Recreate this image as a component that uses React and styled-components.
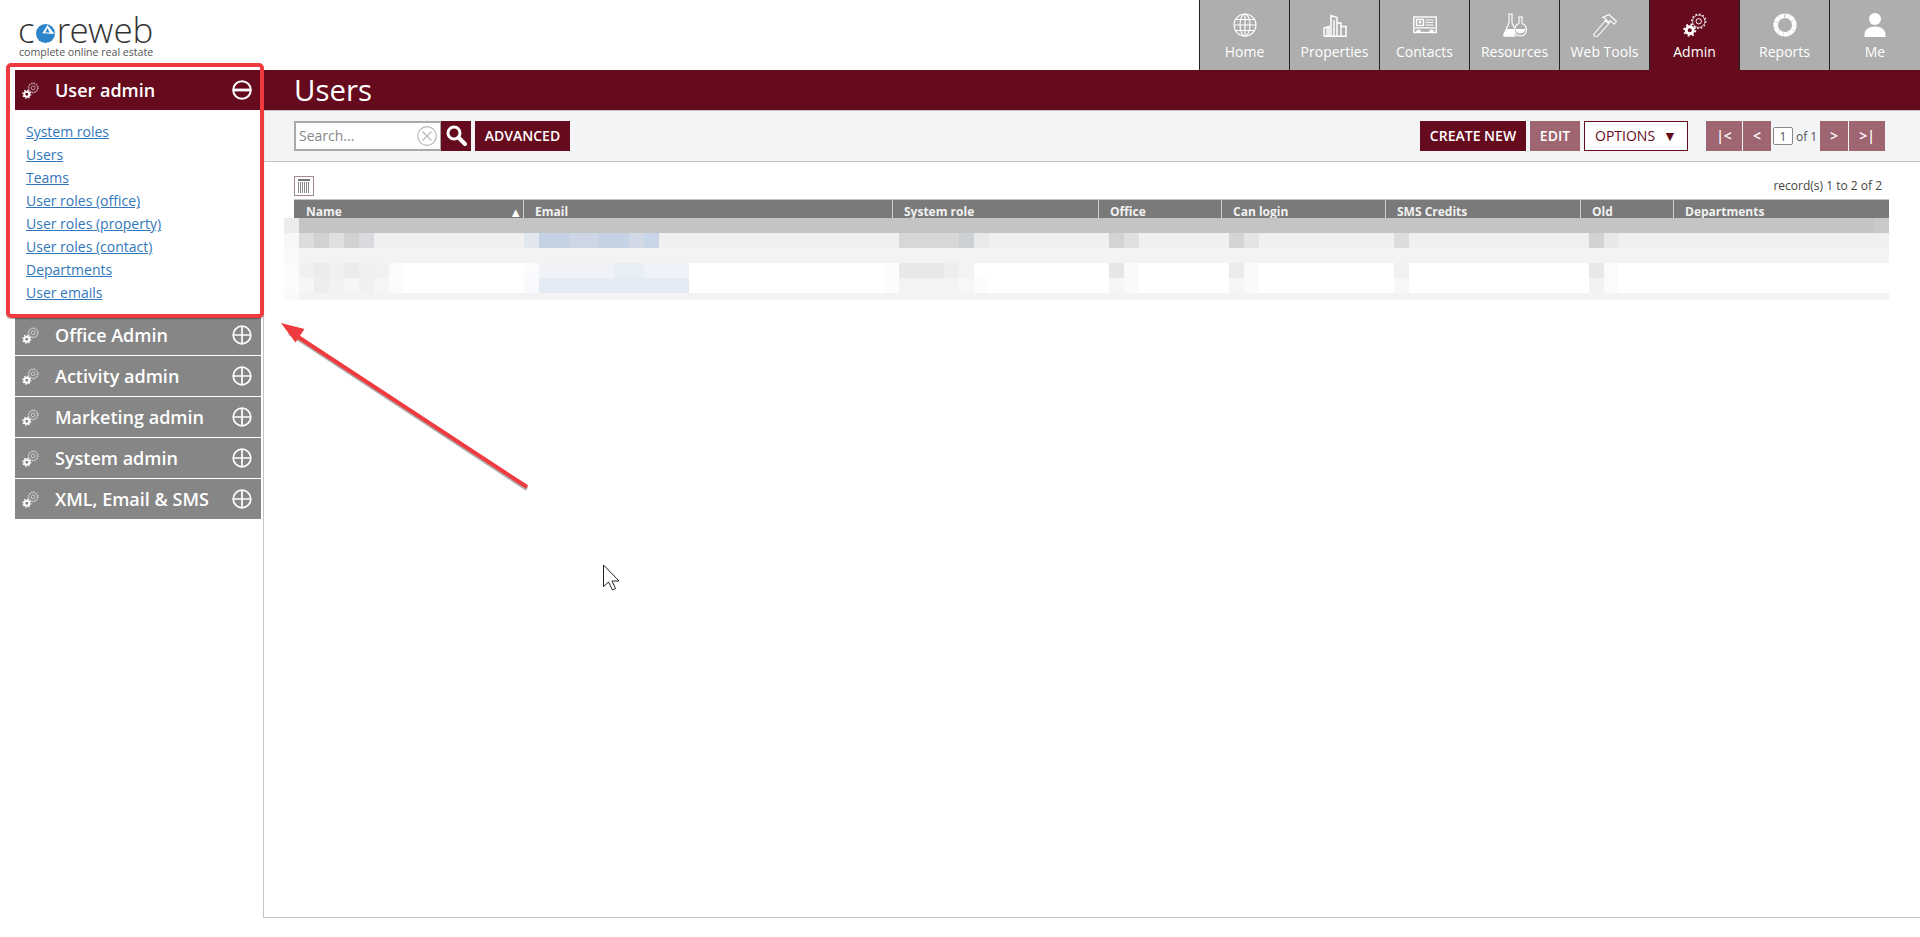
import React from "react";
import styled, { createGlobalStyle } from "styled-components";

const MAROON = "#660b1e";
const FADED = "#9f6571";

const Global = createGlobalStyle`
  html, body { margin: 0; padding: 0; background: #fff; }
  body { font-family: "Open Sans", "Liberation Sans", sans-serif; color: #444; height: 937px; overflow: hidden; }
  * { box-sizing: border-box; }
`;

const Page = styled.div`position: relative; width: 1920px; height: 937px; overflow: hidden;`;
const Header = styled.header`display: flex; justify-content: space-between; height: 70px;`;
const Logo = styled.div`padding: 12px 0 0 18px; width: 170px;`;
const LogoWord = styled.div`
  display: flex; align-items: flex-end; height: 35px; font-family: "Open Sans Light", "Open Sans", sans-serif;
  font-size: 35px; font-weight: 300; line-height: 35px; color: #333;
  svg { margin: 0 2px 4px 1px; flex: none; }
`;
const LogoTag = styled.div`font-size: 10.6px; line-height: 16px; margin: -3px 0 0 1px; color: #555; white-space: nowrap;`;
const Nav = styled.nav`display: grid; grid-template-columns: repeat(7, 90px) 91px;`;
const Tab = styled.a`
  display: flex; flex-direction: column; align-items: center; height: 70px; padding-top: 13px;
  border-left: 1px solid #222; background: ${p => (p.$active ? MAROON : "#aeaeae")};
  color: #fff; font-size: 14px; line-height: 20px;
  svg { display: block; margin-bottom: 5px; }
`;

const Body = styled.div`display: flex; height: 848px;`;
const Sidebar = styled.aside`width: 263px; padding: 0 2px 0 15px; flex: none;`;
const SectionHead = styled.div`
  display: flex; align-items: center; height: 40px; margin-bottom: ${p => (p.$open ? 0 : "1px")};
  padding: 0 9px 0 7px; background: ${p => (p.$open ? MAROON : "#868686")};
  color: #fff; font-size: 18px; font-weight: 600; white-space: nowrap;
`;
const SectionTitle = styled.span`flex: 1; padding-left: 16px;`;
const Links = styled.ul`list-style: none; margin: 0; padding: 10px 0 11px 11px;`;
const LinkItem = styled.li`height: 23px; line-height: 23px; font-size: 14px;`;
const SideLink = styled.a`color: #3277bb; text-decoration: underline;`;

const Main = styled.main`flex: 1; border-left: 1px solid #c4c4c4; border-bottom: 1px solid #c4c4c4; min-width: 0;`;
const TitleBar = styled.h1`
  margin: 0; height: 40px; padding-left: 30px; background: ${MAROON}; color: #fff;
  font-size: 29.4px; font-weight: 400; line-height: 40px;
`;
const Toolbar = styled.div`
  display: flex; align-items: center; height: 52px; padding: 0 35px 0 30px;
  background: #f3f4f6; border-top: 1px solid #c0c4c8; border-bottom: 1px solid #c0c4c8;
`;
const SearchBox = styled.div`
  display: flex; align-items: center; justify-content: space-between; width: 147px; height: 30px;
  padding: 0 3px 1px 3px; background: #fff; border: 1px solid #aaa; border-width: 2px 1px 2px 2px;
  font-size: 14px; color: #888;
`;
const Button = styled.button`
  display: inline-flex; align-items: center; justify-content: center; height: 30px; padding: 0 0 1px;
  width: ${p => p.$w}px; margin-left: ${p => p.$ml || 0}px; border: 0; background: ${p => (p.$faded ? FADED : MAROON)};
  color: #fff; font: 600 14px "Open Sans", sans-serif; white-space: nowrap;
`;
const OptionsButton = styled(Button)`
  background: #fff; border: 1px solid ${MAROON}; color: ${MAROON}; font-weight: 400; gap: 8px;
`;
const Spacer = styled.div`flex: 1;`;
const PageInput = styled.span`
  display: inline-flex; align-items: center; justify-content: center; width: 20px; height: 18px; margin-left: 2px;
  background: #fff; border: 1px solid #888; border-radius: 2px; font-size: 12px; color: #555;
`;
const PageOf = styled.span`width: 27px; padding-left: 3px; font-size: 12px; color: #555; white-space: nowrap;`;

const Content = styled.section`padding: 14px 31px 0 30px;`;
const ListTop = styled.div`display: flex; align-items: center; justify-content: space-between; height: 20px; margin-bottom: 3px; padding-right: 7px;`;
const ColumnsButton = styled.span`display: flex; width: 20px; height: 20px;`;
const Records = styled.span`font-size: 12px; color: #444; margin-bottom: 2px;`;
const HeadRow = styled.div`
  display: grid; grid-template-columns: 229px 369px 206px 123px 164px 195px 93px 215px;
  height: 19px; background: #7a7a7a; border-top: 1px solid #c4c4c4; overflow: hidden;
`;
const HeadCell = styled.div`
  position: relative; padding-left: 11px; border-left: 1px solid ${p => (p.$first ? "#7a7a7a" : "#cfcfcf")};
  color: #f2f2f2; font-size: 12px; font-weight: 700; line-height: 23px; white-space: nowrap;
`;
const SortMark = styled.span`position: absolute; right: 1px; top: 1px; font-size: 13px; color: #fff;`;
const Mosaic = styled.div`margin-left: -10px; width: 1605px;`;
const MosaicRow = styled.div`display: flex; height: ${p => p.$h}px;`;
const MosaicCell = styled.i.attrs(p => ({ style: { width: p.$w, background: p.$c } }))`display: block; flex: none;`;

const RedBox = styled.div`
  position: absolute; left: 6px; top: 63px; width: 258px; height: 255px;
  border: 4px solid #ef3b3f; border-radius: 5px; box-shadow: 0 1px 1px rgba(0,0,0,.35);
`;
const Overlay = styled.svg`position: absolute; left: 0; top: 0; pointer-events: none;`;

/* ---- icons ---- */
const Gears = ({ size = 24, op = 1 }) => (
  <svg width={size} height={size} viewBox="0 0 32 32" fill="none" stroke="#fff">
    <g opacity={op}>
      <circle cx="21" cy="11" r="8.200" strokeWidth="1" />
      <circle cx="21" cy="11" r="9.500" strokeWidth="1.600" strokeDasharray="2.200 2.770" />
      <circle cx="21" cy="11" r="3.600" strokeWidth="1.300" />
    </g>
    <circle cx="9" cy="23" r="4.700" strokeWidth="3.800" />
    <circle cx="9" cy="23" r="7.500" strokeWidth="2.400" strokeDasharray="2.600 3.290" />
  </svg>
);
const Globe = () => (
  <svg width="24" height="24" viewBox="0 0 24 24" fill="none" stroke="#fff" strokeWidth="1.100">
    <circle cx="12" cy="12" r="11" />
    <ellipse cx="12" cy="12" rx="5" ry="11" />
    <path d="M12 1v22M1 12h22M2.800 6.500h18.400M2.800 17.500h18.400" />
  </svg>
);
const Buildings = () => (
  <svg width="24" height="24" viewBox="0 0 24 24" fill="none" stroke="#fff" strokeWidth="1.500">
    <path d="M1 23v-8l5-1.500V23M4 23V15M8 23V2.500l6 2v5.500M11 23V7M14 23V10h4v3.500h5V23M18 23V13.500M1 23.200h22.500" />
  </svg>
);
const Card = () => (
  <svg width="24" height="24" viewBox="0 0 24 24" fill="none" stroke="#fff" strokeWidth="1.400">
    <rect x="0.800" y="4" width="22.400" height="15.500" />
    <rect x="3.500" y="6.500" width="7" height="6" />
    <rect x="5.800" y="8" width="2.400" height="2.400" fill="#fff" stroke="none" />
    <path d="M12.500 7h8M12.500 9.500h8M12.500 12h8M2 14.800h20" strokeWidth="1.200" />
    <path d="M3 19.500c0-2 1-3 2.500-3s2.500 1 2.500 3zM16 19.500c0-2 1-3 2.500-3s2.500 1 2.500 3z" fill="#fff" stroke="none" />
  </svg>
);
const Flasks = () => (
  <svg width="24" height="24" viewBox="0 0 24 24" fill="none" stroke="#fff" strokeWidth="1.100">
    <path d="M5 1h5M6 1v9M9 1v9" />
    <path d="M6 10 .8 21.500c-.4 1 .2 1.800 1.200 1.800h10l1-1M9 10l3 6" />
    <path d="M3.500 16h7.500l1 5-1 2.300H2c-1 0-1.600-.8-1.200-1.800z" fill="#fff" stroke="none" />
    <path d="M15 4h5M16 4v6.500c-3 1-4.500 3.500-4.500 6.500a6 6 0 0 0 12 0c0-3-1.500-5.500-4.500-6.500V4" />
    <path d="M12.500 16h10a5.200 5.200 0 0 1-10 1z" fill="#fff" stroke="none" />
  </svg>
);
const Hammer = () => (
  <svg width="24" height="24" viewBox="0 0 24 24" fill="none" stroke="#fff" strokeWidth="1.100" strokeLinejoin="round">
    <path d="M1 21 13 7l3.500 3L4 23.800c-1.200.8-3.800-1-3-2.800z" />
    <path d="M9.500 4.500 16 1.500l7.500 7-2.500 2.700-4-3.700-2 2.500-3-2.500 1-1.500c-1-1-2.500-1.500-3.500-1.500z" />
  </svg>
);
const Ring = () => (
  <svg width="24" height="24" viewBox="0 0 24 24" fill="none">
    <circle cx="12" cy="12" r="9.300" stroke="#fff" strokeWidth="4.600" />
    <circle cx="12" cy="12" r="9.300" stroke="#c9c9c9" strokeWidth="4.600" strokeDasharray="0.500 4.800" />
    <path d="M12 .5v4" stroke="#d9b3c4" strokeWidth="1" />
  </svg>
);
const Person = () => (
  <svg width="24" height="24" viewBox="0 0 24 24" fill="#fff">
    <circle cx="12" cy="6" r="6" />
    <path d="M1.500 24v-2.500c0-5 4.500-8 10.500-8s10.500 3 10.500 8V24z" />
  </svg>
);
const PlusMinus = ({ open }) => (
  <svg width="20" height="20" viewBox="0 0 20 20" fill="none" stroke="#fff" strokeWidth={open ? 2 : 1.700}>
    <circle cx="10" cy="10" r="8.800" />
    {open ? <path d="M2 10h16" strokeWidth="2.800" /> : <path d="M2 10h16M10 2v16" />}
  </svg>
);
const LogoO = () => (
  <svg width="19" height="19" viewBox="0 0 24 24">
    <circle cx="12" cy="12" r="12" fill="#2d84c8" />
    <path d="M14.500 1.200 8 11.800 23.500 12.500z" fill="#fff" />
    <path d="M14.500 5 11.800 10.600h5.400z" fill="#2d84c8" />
  </svg>
);
const Magnifier = () => (
  <svg width="22" height="24" viewBox="0 0 22 24" fill="none" stroke="#fff">
    <circle cx="9" cy="9" r="6" strokeWidth="3" />
    <path d="M13.500 13.500 20 20" strokeWidth="4" strokeLinecap="round" />
  </svg>
);
const ClearX = () => (
  <svg width="20" height="20" viewBox="0 0 20 20" fill="none" stroke="#b8b8b8" strokeWidth="1.200">
    <circle cx="10" cy="10" r="9.300" />
    <path d="M5.500 5.500l9 9M14.500 5.500l-9 9" />
  </svg>
);
const ColumnsIcon = () => (
  <svg width="20" height="20" viewBox="0 0 20 20" fill="none">
    <rect x=".5" y=".5" width="19" height="19" stroke="#a08a94" fill="#fff" />
    <rect x="4" y="3" width="12" height="2" fill="#777" />
    <path d="M4.500 6v11M6.500 6v11M8.500 6v11M10.500 6v11M12.500 6v11M14.500 6v11" stroke="#8a8a8a" />
  </svg>
);

/* ---- data ---- */
const TABS = [
  ["Home", <Globe />], ["Properties", <Buildings />], ["Contacts", <Card />], ["Resources", <Flasks />],
  ["Web Tools", <Hammer />], ["Admin", <Gears />, true], ["Reports", <Ring />], ["Me", <Person />],
];
const LINKS = ["System roles", "Users", "Teams", "User roles (office)", "User roles (property)", "User roles (contact)", "Departments", "User emails"];
const SECTIONS = ["Office Admin", "Activity admin", "Marketing admin", "System admin", "XML, Email & SMS"];
const COLUMNS = ["Name", "Email", "System role", "Office", "Can login", "SMS Credits", "Old", "Departments"];

const mosaicRow = (base, first, marks) => {
  const out = [[15, first]];
  let x = 299;
  marks.forEach(([a, b, c]) => {
    if (a > x) out.push([a - x, base]);
    out.push([b - a, c]);
    x = b;
  });
  if (x < 1889) out.push([1889 - x, base]);
  return out;
};
const MOSAIC = [
  { h: 15, cells: mosaicRow("#c4c4c4", "#ececec", [[1874, 1889, "#c9c9c9"]]) },
  { h: 15, cells: mosaicRow("#f0f0f0", "#f7f7f7", [
    [299, 314, "#dcdcda"], [314, 329, "#d2d0d0"], [329, 344, "#dfdfdf"], [344, 359, "#d2d1cf"], [359, 374, "#dadade"],
    [524, 539, "#e2e6ee"], [539, 569, "#c4d2e4"], [569, 599, "#ccd6e4"], [599, 629, "#c4d2e4"], [629, 644, "#d0d9e5"], [644, 659, "#c8d5e6"],
    [899, 959, "#d6d7d6"], [959, 974, "#cdd0d2"], [974, 989, "#e9e9e9"],
    [1109, 1124, "#d3d3d3"], [1124, 1139, "#e0e0e2"], [1229, 1244, "#d4d4d4"], [1244, 1259, "#e4e4e4"],
    [1394, 1409, "#dcdcdc"], [1589, 1604, "#d2d2d2"], [1604, 1619, "#e8e8e8"],
  ]) },
  { h: 15, cells: mosaicRow("#f3f3f3", "#fafafa", []) },
  { h: 15, cells: mosaicRow("#ffffff", "#fbfbfb", [
    [299, 314, "#f0f0f0"], [314, 329, "#eceaec"], [329, 344, "#f0f0f0"], [344, 359, "#ebebeb"], [359, 374, "#f0f0f0"], [374, 389, "#f1f2ef"], [389, 404, "#fbfbfb"],
    [524, 539, "#fbfbfd"], [539, 614, "#f0f2f8"], [614, 644, "#e8eef5"], [644, 689, "#eff2f9"],
    [884, 899, "#fcfcfc"], [899, 944, "#e8e8e8"], [944, 959, "#eeeeee"], [959, 974, "#f3f3f3"],
    [1109, 1124, "#e6e6e6"], [1124, 1139, "#fafafa"], [1229, 1244, "#ebebeb"], [1244, 1259, "#fafafa"],
    [1394, 1409, "#f1f1f1"], [1589, 1604, "#e8e8e8"], [1604, 1619, "#fbfbfb"],
  ]) },
  { h: 15, cells: mosaicRow("#ffffff", "#fbfbfb", [
    [299, 314, "#f6f6f4"], [314, 329, "#eeecef"], [329, 344, "#f2f2f2"], [344, 359, "#f6f6f6"], [359, 374, "#f0f0f2"], [374, 389, "#f5f6f3"], [389, 404, "#fbfbfb"],
    [524, 539, "#f8f9fc"], [539, 689, "#e4ebf5"],
    [884, 899, "#fcfcfc"], [899, 959, "#f2f4f3"], [959, 974, "#f7f7f7"], [974, 989, "#fcfcfc"],
    [1109, 1124, "#f6f6f6"], [1124, 1139, "#fafafa"], [1229, 1244, "#f6f6f6"], [1244, 1259, "#fafafa"],
    [1394, 1409, "#f7f7f7"], [1589, 1604, "#f2f2f2"], [1604, 1619, "#fbfbfb"],
  ]) },
  { h: 7, cells: mosaicRow("#f3f3f3", "#fafafa", []) },
];

export default function App() {
  return (
    <Page>
      <Global />
      <Header>
        <Logo>
          <LogoWord>c<LogoO />reweb</LogoWord>
          <LogoTag>complete online real estate</LogoTag>
        </Logo>
        <Nav>
          {TABS.map(([label, icon, active]) => (
            <Tab key={label} $active={active}>{icon}{label}</Tab>
          ))}
        </Nav>
      </Header>
      <Body>
        <Sidebar>
          <SectionHead $open>
            <Gears size={17} op={0.85} />
            <SectionTitle>User admin</SectionTitle>
            <PlusMinus open />
          </SectionHead>
          <Links>
            {LINKS.map(l => (
              <LinkItem key={l}><SideLink>{l}</SideLink></LinkItem>
            ))}
          </Links>
          {SECTIONS.map(s => (
            <SectionHead key={s}>
              <Gears size={17} op={0.85} />
              <SectionTitle>{s}</SectionTitle>
              <PlusMinus />
            </SectionHead>
          ))}
        </Sidebar>
        <Main>
          <TitleBar>Users</TitleBar>
          <Toolbar>
            <SearchBox>Search...<ClearX /></SearchBox>
            <Button $w={30}><Magnifier /></Button>
            <Button $w={95} $ml={4}>ADVANCED</Button>
            <Spacer />
            <Button $w={106}>CREATE NEW</Button>
            <Button $w={50} $ml={4} $faded>EDIT</Button>
            <OptionsButton $w={104} $ml={4}>OPTIONS <span>▼</span></OptionsButton>
            <Button $w={36} $ml={18} $faded>|&lt;</Button>
            <Button $w={28} $ml={1} $faded>&lt;</Button>
            <PageInput>1</PageInput>
            <PageOf>of 1</PageOf>
            <Button $w={28} $faded>&gt;</Button>
            <Button $w={36} $ml={1} $faded>&gt;|</Button>
          </Toolbar>
          <Content>
            <ListTop>
              <ColumnsButton><ColumnsIcon /></ColumnsButton>
              <Records>record(s) 1 to 2 of 2</Records>
            </ListTop>
            <HeadRow>
              {COLUMNS.map((c, i) => (
                <HeadCell key={c} $first={i === 0}>
                  {c}
                  {i === 0 && <SortMark>▲</SortMark>}
                </HeadCell>
              ))}
            </HeadRow>
            <Mosaic>
              {MOSAIC.map((row, r) => (
                <MosaicRow key={r} $h={row.h}>
                  {row.cells.map(([w, c], i) => <MosaicCell key={i} $w={w} $c={c} />)}
                </MosaicRow>
              ))}
            </Mosaic>
          </Content>
        </Main>
      </Body>
      <RedBox />
      <Overlay width="1920" height="937" viewBox="0 0 1920 937">
        <path d="M527.500 488 290 332" stroke="#777" strokeWidth="4" transform="translate(-.5 1)" opacity=".6" />
        <path d="M527 487 289 331" stroke="#ef3b3f" strokeWidth="4" />
        <path d="M281 323 304.500 329 295.500 342.500z" fill="#ef3b3f" />
        <path d="M603.500 565v21.500l5-4.500 4 8 3-1.500-3.500-7.500h7z" fill="#fff" stroke="#222" strokeWidth="1" />
      </Overlay>
    </Page>
  );
}
